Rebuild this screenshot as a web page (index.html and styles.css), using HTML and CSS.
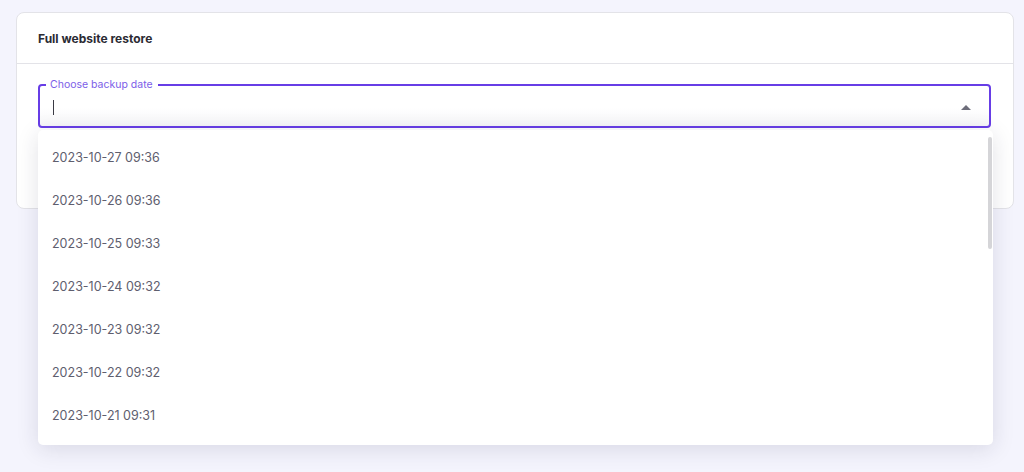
FILE: index.html
```html
<!DOCTYPE html>
<html lang="en">
<head>
<meta charset="utf-8">
<title>Full website restore</title>
<link rel="stylesheet" href="styles.css">
</head>
<body>
<section class="card">
  <header class="card-head">Full website restore</header>
  <div class="card-body">
    <div class="select">
      <fieldset class="field">
        <legend class="field-label">Choose backup date</legend>
        <div class="field-row">
          <span class="cursor"></span>
          <span class="arrow"></span>
        </div>
      </fieldset>
      <div class="menu">
        <ul class="menu-list">
          <li class="menu-item">2023-10-27 09:36</li>
          <li class="menu-item">2023-10-26 09:36</li>
          <li class="menu-item">2023-10-25 09:33</li>
          <li class="menu-item">2023-10-24 09:32</li>
          <li class="menu-item">2023-10-23 09:32</li>
          <li class="menu-item">2023-10-22 09:32</li>
          <li class="menu-item">2023-10-21 09:31</li>
        </ul>
        <span class="menu-thumb"></span>
      </div>
    </div>
  </div>
</section>
</body>
</html>
```

FILE: styles.css
```css
* { box-sizing: border-box; }

html, body {
  margin: 0;
  height: 100%;
}

body {
  background: #f4f4fd;
  padding: 12px 10px 0 16px;
  font-family: "Inter", "Noto Sans", sans-serif;
  color: #1d1e20;
}

.card {
  background: #fff;
  border: 1px solid #e3e3e8;
  border-radius: 8px;
  height: 197px;
}

.card-head {
  height: 51px;
  padding: 0 21px;
  display: flex;
  align-items: center;
  font-size: 12px;
  font-weight: 700;
  color: #2b2b33;
  border-bottom: 1px solid #e3e3e8;
}

.card-body {
  padding: 15px 22px 0 21px;
}

.select {
  position: relative;
}

.field {
  margin: 0;
  padding: 0 12px 0 13px;
  height: 49px;
  border: 2px solid #673de6;
  border-radius: 4px;
  background: linear-gradient(#fff 55%, #f6f6f8);
}

.field-label {
  font-size: 10.5px;
  color: #7c5ee8;
  padding: 0 5px 0 4px;
  margin-left: -7px;
  line-height: 12px;
}

.field-row {
  height: 35px;
  display: flex;
  align-items: center;
  justify-content: space-between;
  padding-bottom: 2px;
}

.cursor {
  width: 1px;
  height: 15px;
  background: #3a3a44;
}

.arrow {
  width: 0;
  height: 0;
  border-left: 5px solid transparent;
  border-right: 5px solid transparent;
  border-bottom: 5px solid #6d6d7a;
  margin-right: 6px;
}

.menu {
  position: absolute;
  left: 0;
  top: 51px;
  width: 955px;
  height: 315px;
  background: #fff;
  border-radius: 5px;
  box-shadow: 0 4px 22px rgba(29, 30, 60, 0.13);
  overflow: hidden;
  z-index: 2;
}

.menu-list {
  margin: 0;
  padding: 6px 0 8px;
  list-style: none;
}

.menu-thumb {
  position: absolute;
  right: 1px;
  top: 7px;
  width: 4px;
  height: 112px;
  border-radius: 2px;
  background: #d5d5d8;
}

.menu-item {
  height: 43px;
  display: flex;
  align-items: center;
  padding: 0 14px;
  font-size: 12.5px;
  color: #5e5e6e;
}
```
